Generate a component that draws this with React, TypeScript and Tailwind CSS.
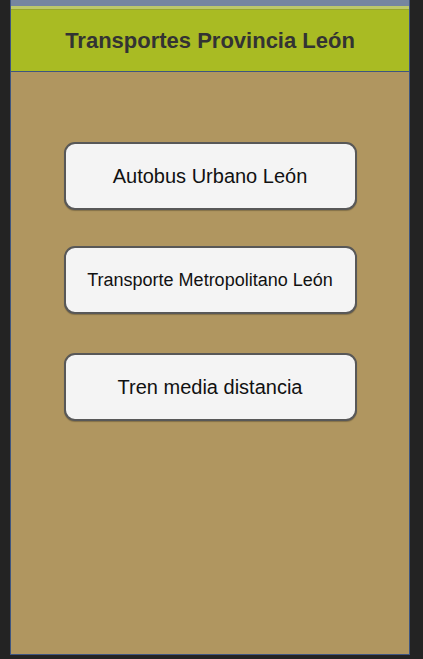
const buttons = [
  { label: "Autobus Urbano León", size: "text-[20px]", gap: "" },
  { label: "Transporte Metropolitano León", size: "text-[18px]", gap: "mt-[36px]" },
  { label: "Tren media distancia", size: "text-[20px]", gap: "mt-[39px]" },
]

export default function App() {
  return (
    <div className="w-[423px] h-[659px] bg-[#232323] font-['Liberation_Sans',Arial,sans-serif]">
      <div className="ml-[10px] w-[400px] h-[655px] flex flex-col border-x border-b border-[#3e5580] bg-[#b09660]">
        <div className="h-[6px] bg-[#7585a0]" />
        <div className="h-[3px] bg-[#bcc86a]" />
        <div className="h-[1px] bg-[#98a62c]" />
        <header className="h-[62px] bg-[#a9bb23] border-b border-[#3e5580] flex items-center justify-center">
          <h1 className="text-[22px] font-bold text-[#333333]">Transportes Provincia León</h1>
        </header>

        <div className="flex flex-col items-center pt-[70px]">
          {buttons.map((b, i) => (
            <button
              key={i}
              className={`w-[293px] h-[68px] rounded-[11px] border-2 border-[#585858] bg-[#f4f4f4] text-[#111111] shadow-[0_1px_1px_rgba(0,0,0,0.25)] ${b.size} ${b.gap}`}
            >
              {b.label}
            </button>
          ))}
        </div>
      </div>
    </div>
  )
}
